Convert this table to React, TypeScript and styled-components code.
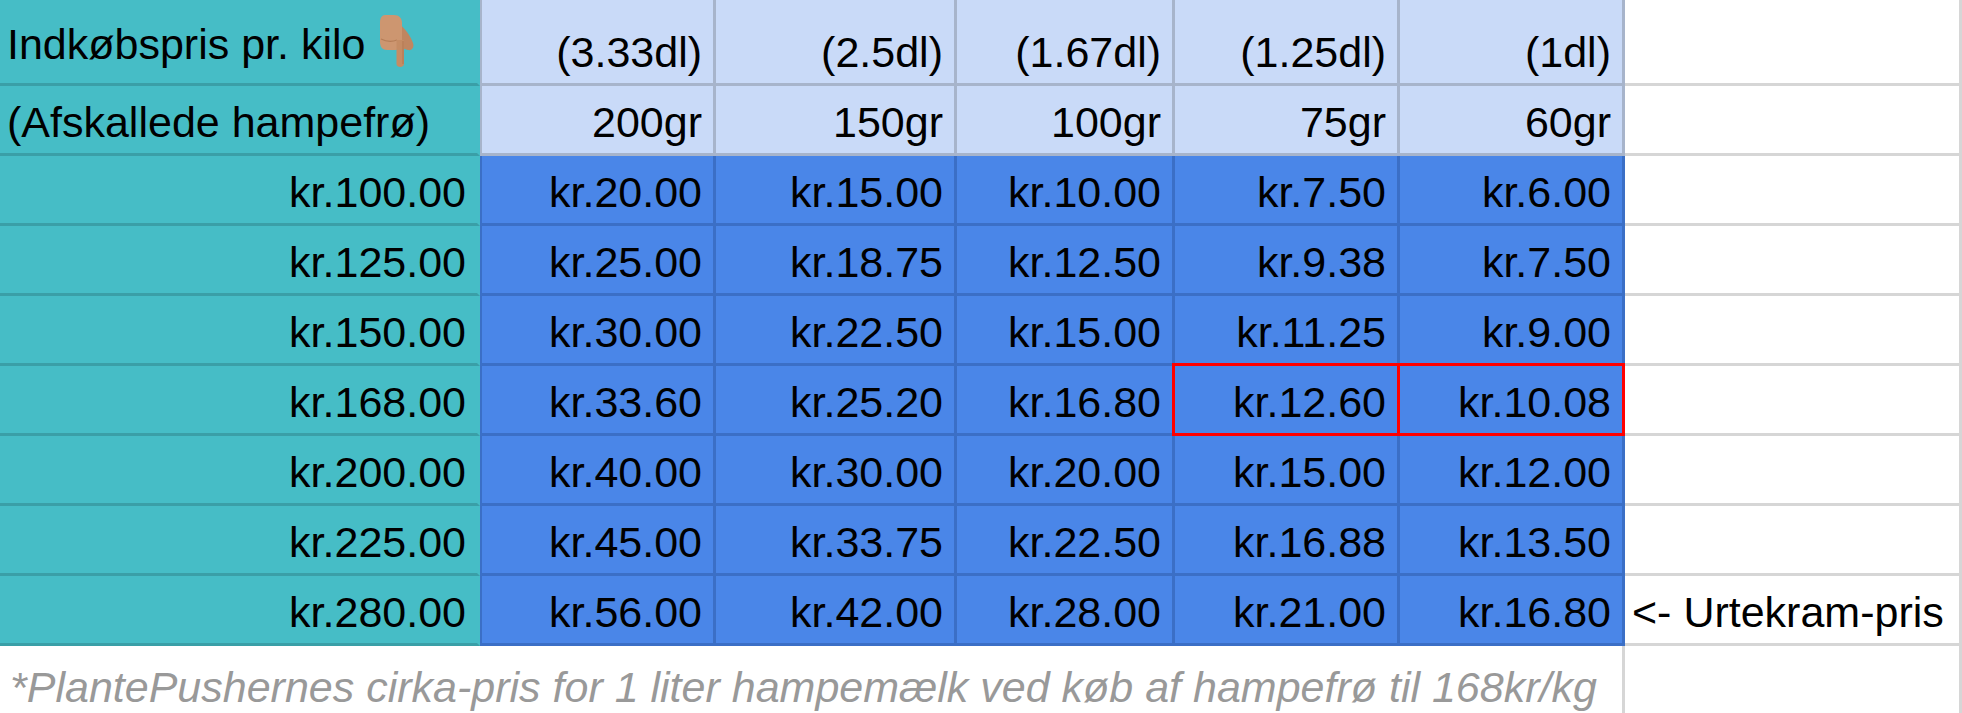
import React from "react";
import styled, { createGlobalStyle, css } from "styled-components";

type Tone = "teal" | "head" | "blue" | "blank";

const tones: Record<Tone, { bg: string; line: string }> = {
  teal: { bg: "#46bdc6", line: "#3a9fa7" },
  head: { bg: "#c9daf8", line: "#a7b4cb" },
  blue: { bg: "#4a86e8", line: "#3b6fc6" },
  blank: { bg: "#ffffff", line: "#d6d6d6" },
};

const sizes = ["(3.33dl)", "(2.5dl)", "(1.67dl)", "(1.25dl)", "(1dl)"];
const grams = [200, 150, 100, 75, 60];
const prices = [100, 125, 150, 168, 200, 225, 280];

// felter med rød ramme (168 kr/kg, 75gr og 60gr)
const isMarked = (price: number, g: number) =>
  price === 168 && (g === 75 || g === 60);

const kr = (n: number) => "kr." + n.toFixed(2);

function PointDown() {
  return (
    <Hand viewBox="0 0 36 54" width="36" height="54">
      <path
        d="M19 9 C25 13 31 21 34 29 C35.5 33 33 37 29 36 L19 33 Z"
        fill="#c08660"
      />
      <path
        d="M6 1 H15 C20 1 23 4 23 9 V29 C23 34 20 36 15 36 H8 C3.5 36 1 33 1 28 V8 C1 4 3 1 6 1 Z"
        fill="#cd9670"
      />
      <path
        d="M2 25 C8 28 13 28 18 26"
        stroke="#a56c46"
        strokeWidth="1.2"
        fill="none"
        opacity="0.6"
      />
      <path
        d="M17.5 26 H25 V50 C25 54 17.5 54 17.5 50 Z"
        fill="#c58c64"
      />
      <path
        d="M24 27 V50"
        stroke="#a56c46"
        strokeWidth="1.2"
        opacity="0.5"
      />
    </Hand>
  );
}

function App() {
  return (
    <>
      <GlobalStyle />
      <Sheet>
        {/* Header rows */}
        <Cell $tone="teal" $lift>
          <span>
            Indkøbspris pr. kilo <PointDown />
          </span>
        </Cell>
        {sizes.map((s, i) => (
          <Cell key={s} $tone="head" $right $lead={i === 0}>
            {s}
          </Cell>
        ))}
        <Cell $tone="blank" />

        <Cell $tone="teal">(Afskallede hampefrø)</Cell>
        {grams.map((g, i) => (
          <Cell key={g} $tone="head" $right $lead={i === 0}>
            {g}gr
          </Cell>
        ))}
        <Cell $tone="blank" />

        {/* Price rows */}
        {prices.map((price) => (
          <React.Fragment key={price}>
            <Cell $tone="teal" $right>
              {kr(price)}
            </Cell>
            {grams.map((g, i) => (
              <Cell
                key={g}
                $tone="blue"
                $right
                $lead={i === 0}
                $marked={isMarked(price, g)}
              >
                {kr((price * g) / 1000)}
              </Cell>
            ))}
            <Cell $tone="blank">{price === 280 ? "<- Urtekram-pris" : ""}</Cell>
          </React.Fragment>
        ))}

        {/* Footer note */}
        <Note $tone="blank">
          *PlantePushernes cirka-pris for 1 liter hampemælk ved køb af hampefrø
          til 168kr/kg
        </Note>
        <Cell $tone="blank" />
      </Sheet>
    </>
  );
}

export default App;

const GlobalStyle = createGlobalStyle`
  html, body {
    margin: 0;
    padding: 0;
    background: #ffffff;
    overflow: hidden;
  }
  body {
    font-family: "Liberation Sans", Arial, sans-serif;
  }
`;

const Sheet = styled.div`
  display: grid;
  width: 1962px;
  grid-template-columns: 480px 236px 241px 218px 225px 225px 337px;
  grid-template-rows: 86px 70px repeat(7, 70px) 70px;
`;

const Cell = styled.div<{
  $tone: Tone;
  $right?: boolean;
  $lead?: boolean;
  $marked?: boolean;
  $lift?: boolean;
}>`
  position: relative;
  box-sizing: border-box;
  display: flex;
  align-items: flex-end;
  justify-content: ${({ $right }) => ($right ? "flex-end" : "flex-start")};
  padding: 0 11px ${({ $lift }) => ($lift ? "14px" : "6px")} 7px;
  font-size: 43px;
  line-height: 49px;
  color: #000000;
  white-space: nowrap;
  background: ${({ $tone }) => tones[$tone].bg};
  border-bottom: 3px solid ${({ $tone }) => tones[$tone].line};
  border-right: 3px solid
    ${({ $tone }) => ($tone === "teal" ? "transparent" : tones[$tone].line)};
  ${({ $lead, $tone }) =>
    $lead &&
    css`
      border-left: 2px solid ${tones[$tone].line};
    `}
  ${({ $marked }) =>
    $marked &&
    css`
      &::after {
        content: "";
        position: absolute;
        top: -3px;
        left: -3px;
        right: -3px;
        bottom: -3px;
        border: 3px solid #ff0000;
        z-index: 1;
        pointer-events: none;
      }
    `}
`;

const Note = styled(Cell)`
  grid-column: span 6;
  font-style: italic;
  color: #999999;
  padding-left: 10px;
  padding-bottom: 1px;
`;

const Hand = styled.svg`
  display: inline-block;
  vertical-align: -9px;
  margin-left: 2px;
`;
